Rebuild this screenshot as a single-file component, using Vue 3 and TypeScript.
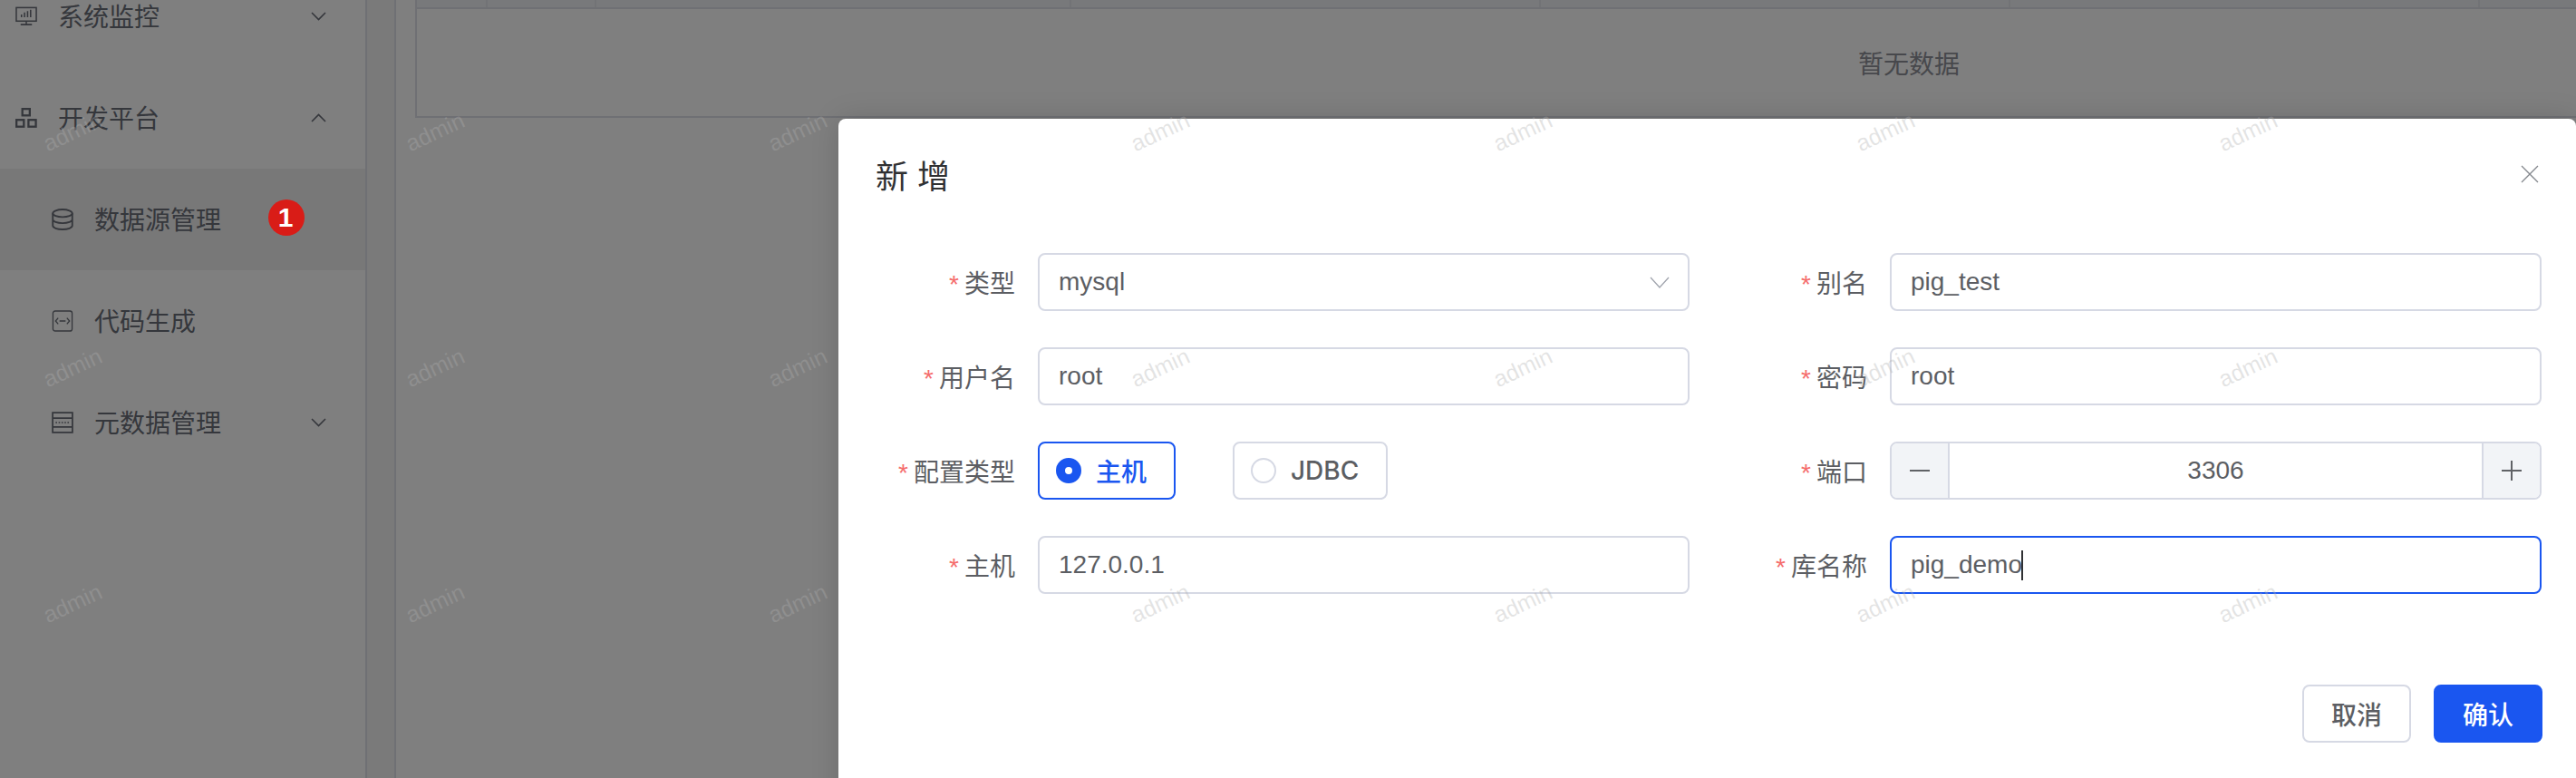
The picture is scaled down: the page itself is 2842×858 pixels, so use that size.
<script setup lang="ts">
interface Field {
  label: string;
  kind: 'select' | 'input' | 'radio' | 'number' | 'focus';
  value?: string;
}

const fields: Field[] = [
  { label: '类型', kind: 'select', value: 'mysql' },
  { label: '别名', kind: 'input', value: 'pig_test' },
  { label: '用户名', kind: 'input', value: 'root' },
  { label: '密码', kind: 'input', value: 'root' },
  { label: '配置类型', kind: 'radio' },
  { label: '端口', kind: 'number', value: '3306' },
  { label: '主机', kind: 'input', value: '127.0.0.1' },
  { label: '库名称', kind: 'focus', value: 'pig_demo' },
];

const columns = [78, 120, 524, 518, 518, 518, 518];
const marks = Array.from({ length: 21 }, (_, i) => i);
</script>

<template>
  <div class="page">
    <aside class="sidebar">
      <div class="menu-row">
        <svg class="icon" viewBox="0 0 25 22" fill="none" stroke="currentColor" stroke-width="1.6">
          <rect x="1" y="1" width="23" height="15.5" />
          <path d="M7 12V9M10.5 12V6.5M14 12V5M17.5 12V3.5M12.5 16.5v3M6 20.5h13" />
        </svg>
        <span>系统监控</span>
        <svg class="chevron" viewBox="0 0 17 10" fill="none" stroke="currentColor" stroke-width="1.6"><path d="M1 1l7.5 7.5L16 1" /></svg>
      </div>
      <div class="menu-row">
        <svg class="icon" viewBox="0 0 25 23" fill="none" stroke="currentColor" stroke-width="2.4">
          <rect x="8" y="1.2" width="8.5" height="7.5" />
          <rect x="1.2" y="13.8" width="8.5" height="7.8" />
          <rect x="15" y="13.8" width="8.5" height="7.8" />
        </svg>
        <span>开发平台</span>
        <svg class="chevron" viewBox="0 0 17 10" fill="none" stroke="currentColor" stroke-width="1.6"><path d="M1 9l7.5-7.5L16 9" /></svg>
      </div>
      <div class="menu-row sub active">
        <svg class="icon" viewBox="0 0 23 23" fill="none" stroke="currentColor" stroke-width="1.8">
          <ellipse cx="11.5" cy="5" rx="10.3" ry="4" />
          <path d="M1.2 5v13c0 2.3 4.6 4 10.3 4s10.3-1.7 10.3-4V5M1.2 11.5c0 2.3 4.6 4 10.3 4s10.3-1.7 10.3-4" />
        </svg>
        <span>数据源管理</span>
        <b class="badge">1</b>
      </div>
      <div class="menu-row sub">
        <svg class="icon" viewBox="0 0 24 25" fill="none" stroke="currentColor" stroke-width="1.4">
          <rect x="1" y="1" width="22" height="23" rx="2.5" />
          <path d="M7 9l-3 3.5L7 16M17 9l3 3.5-3 3.5M8.5 12.5h7" />
        </svg>
        <span>代码生成</span>
      </div>
      <div class="menu-row sub">
        <svg class="icon" viewBox="0 0 22 22" fill="none" stroke="currentColor" stroke-width="1.6">
          <rect x="1" y="1" width="20" height="20" />
          <path d="M1 6.5h20M1 15.5h20" />
          <path d="M4 11h14" stroke-dasharray="1.5 1.5" />
        </svg>
        <span>元数据管理</span>
        <svg class="chevron" viewBox="0 0 17 10" fill="none" stroke="currentColor" stroke-width="1.6"><path d="M1 1l7.5 7.5L16 1" /></svg>
      </div>
    </aside>

    <div class="gutter"></div>

    <main class="content">
      <div class="table">
        <div class="table-head">
          <i v-for="(w, idx) in columns" :key="idx" class="head-cell" :style="{ width: `${w}px` }"></i>
        </div>
        <div class="table-empty">暂无数据</div>
      </div>
    </main>

    <div class="mask"></div>

    <section class="dialog">
      <button class="close" type="button" aria-label="关闭">
        <svg viewBox="0 0 20 20" fill="none" stroke="currentColor" stroke-width="1.3"><path d="M1 1l18 18M19 1L1 19" /></svg>
      </button>
      <h2 class="dialog-title">新 增</h2>

      <form class="form" @submit.prevent>
        <div v-for="field in fields" :key="field.label" class="form-item">
          <label class="form-label"><em>*</em>{{ field.label }}</label>

          <div v-if="field.kind === 'select'" class="input">
            <span>{{ field.value }}</span>
            <svg class="select-arrow" viewBox="0 0 22 13" fill="none" stroke="currentColor" stroke-width="1.3"><path d="M1 1l10 11L21 1" /></svg>
          </div>

          <div v-else-if="field.kind === 'input'" class="input">
            <span>{{ field.value }}</span>
          </div>

          <div v-else-if="field.kind === 'focus'" class="input focused">
            <span>{{ field.value }}</span><i class="caret"></i>
          </div>

          <div v-else-if="field.kind === 'radio'" class="radio-group">
            <div class="radio checked"><i class="radio-dot"></i><span>主机</span></div>
            <div class="radio"><i class="radio-dot"></i><span>JDBC</span></div>
          </div>

          <div v-else class="number">
            <button class="step" type="button" aria-label="减少">
              <svg viewBox="0 0 22 22" fill="none" stroke="currentColor" stroke-width="2"><path d="M0 11h22" /></svg>
            </button>
            <span class="number-value">{{ field.value }}</span>
            <button class="step" type="button" aria-label="增加">
              <svg viewBox="0 0 22 22" fill="none" stroke="currentColor" stroke-width="2"><path d="M0 11h22M11 0v22" /></svg>
            </button>
          </div>
        </div>
      </form>

      <footer class="dialog-footer">
        <button class="btn" type="button">取消</button>
        <button class="btn primary" type="button">确认</button>
      </footer>
    </section>

    <div class="watermarks">
      <span v-for="m in marks" :key="m" class="mark"><span>admin</span></span>
    </div>
  </div>
</template>

<style scoped>
.page {
  position: relative;
  display: flex;
  width: 2842px;
  height: 858px;
  overflow: hidden;
  background: #fff;
  color: #5c5e63;
  font-family: "Liberation Sans", "Noto Sans CJK SC", sans-serif;
  font-size: 28px;
}

.sidebar {
  flex: none;
  box-sizing: border-box;
  width: 405px;
  margin-top: -38px;
  border-right: 2px solid #dfe1e8;
  background: #fff;
  color: #6a6e78;
}

.menu-row {
  display: flex;
  align-items: center;
  height: 112px;
  padding: 0 43px 0 17px;
  box-sizing: border-box;
}

.menu-row > span {
  margin-top: -2px;
}

.menu-row.sub {
  padding-left: 57px;
}

.menu-row.active {
  background: #f0f0f0;
}

.icon {
  flex: none;
  width: 24px;
  height: 24px;
  margin-right: 23px;
}

.chevron {
  flex: none;
  width: 17px;
  height: 10px;
  margin-left: auto;
}

.badge {
  position: relative;
  z-index: 2;
  display: flex;
  align-items: center;
  justify-content: center;
  box-sizing: border-box;
  width: 40px;
  height: 40px;
  margin: -4px 0 0 52px;
  padding-right: 2px;
  border-radius: 50%;
  background: #d91c17;
  color: #fff;
  font-size: 30px;
  font-weight: 700;
}

.gutter {
  flex: none;
  box-sizing: border-box;
  width: 32px;
  border-right: 2px solid #dfe1e8;
  background: #f5f5f5;
}

.content {
  flex: none;
  padding-left: 21px;
}

.table {
  box-sizing: border-box;
  width: 3294px;
  border-left: 2px solid #dfe1e8;
  border-bottom: 2px solid #dfe1e8;
}

.table-head {
  display: flex;
  height: 10px;
  box-sizing: border-box;
  border-bottom: 2px solid #dfe1e8;
  background: #f1f2f6;
}

.head-cell {
  flex: none;
  box-sizing: border-box;
  border-right: 2px solid #e4e6ec;
}

.table-empty {
  display: flex;
  align-items: center;
  justify-content: center;
  height: 118px;
  color: #8f9199;
}

.mask {
  position: absolute;
  inset: 0;
  background: rgba(0, 0, 0, 0.5);
}

.dialog {
  position: absolute;
  top: 131px;
  left: 925px;
  box-sizing: border-box;
  width: 1917px;
  height: 800px;
  padding: 42px 37px 0 41px;
  border-radius: 8px;
  background: #fff;
  box-shadow: 0 0 32px rgba(0, 0, 0, 0.14);
}

.close {
  position: absolute;
  top: 51px;
  right: 41px;
  width: 20px;
  height: 20px;
  padding: 0;
  border: 0;
  background: none;
  color: #85888e;
}

.close svg {
  display: block;
}

.dialog-title {
  height: 46px;
  margin: 0 0 60px;
  color: #303133;
  font-size: 36px;
  font-weight: 400;
  line-height: 46px;
}

.form {
  display: grid;
  grid-template-columns: 898px 898px;
  column-gap: 42px;
  row-gap: 40px;
}

.form-item {
  display: flex;
  align-items: center;
  height: 64px;
}

.form-label {
  flex: none;
  width: 154px;
  margin-right: 25px;
  text-align: right;
}

.form-label em {
  margin-right: 6px;
  color: #f56c6c;
  font-style: normal;
}

.input {
  display: flex;
  flex: 1;
  align-items: center;
  box-sizing: border-box;
  height: 64px;
  padding: 0 20px 0 21px;
  border: 2px solid #d6d9e4;
  border-radius: 8px;
}

.input.focused {
  border-color: #1a56f0;
}

.select-arrow {
  width: 22px;
  height: 13px;
  margin-left: auto;
  color: #a0a4ad;
}

.caret {
  display: inline-block;
  width: 2px;
  height: 33px;
  margin-left: -1px;
  background: #303133;
}

.radio-group {
  display: flex;
  gap: 63px;
}

.radio {
  display: flex;
  align-items: center;
  box-sizing: border-box;
  height: 64px;
  padding: 0 30px 0 18px;
  border: 2px solid #d6d9e4;
  border-radius: 8px;
  font-family: Inter, "Noto Sans CJK SC", sans-serif;
  font-weight: 500;
}

.radio-dot {
  box-sizing: border-box;
  width: 28px;
  height: 28px;
  margin-right: 16px;
  border: 2px solid #d6d9e4;
  border-radius: 50%;
}

.radio.checked {
  border-color: #1a56f0;
  color: #1a56f0;
}

.radio.checked .radio-dot {
  border: 10px solid #1a56f0;
  background: #fff;
}

.number {
  display: flex;
  flex: 1;
  align-items: stretch;
  box-sizing: border-box;
  height: 64px;
  overflow: hidden;
  border: 2px solid #d6d9e4;
  border-radius: 8px;
}

.number-value {
  display: flex;
  flex: 1;
  align-items: center;
  justify-content: center;
  border-left: 2px solid #d6d9e4;
  border-right: 2px solid #d6d9e4;
}

.step {
  flex: none;
  width: 62px;
  padding: 0;
  border: 0;
  background: #f2f4f7;
  color: #606266;
}

.step svg {
  display: block;
  width: 22px;
  height: 22px;
  margin: 0 auto;
}

.dialog-footer {
  display: flex;
  justify-content: flex-end;
  gap: 25px;
  margin-top: 100px;
}

.btn {
  width: 120px;
  height: 64px;
  padding: 0;
  border: 2px solid #d6d9e4;
  border-radius: 8px;
  background: #fff;
  color: #5c5e63;
  font-family: "Noto Sans CJK SC", sans-serif;
  font-size: 28px;
  font-weight: 500;
}

.btn.primary {
  border-color: #1a56f0;
  background: #1a56f0;
  color: #fff;
}

.watermarks {
  position: absolute;
  top: 15px;
  left: -120px;
  display: grid;
  grid-template-columns: repeat(7, 400px);
  grid-auto-rows: 260px;
  pointer-events: none;
}

.mark {
  display: flex;
  align-items: center;
  justify-content: center;
  color: rgba(175, 175, 175, 0.34);
  font-size: 25px;
}

.mark span {
  transform: rotate(-25deg);
}
</style>
